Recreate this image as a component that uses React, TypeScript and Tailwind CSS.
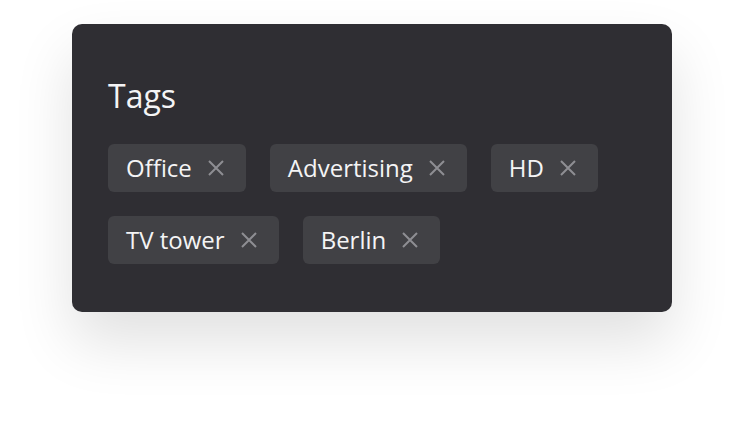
const tags = ["Office", "Advertising", "HD", "TV tower", "Berlin"];

function CloseIcon() {
  return (
    <svg width="24" height="24" viewBox="0 0 24 24" className="shrink-0 text-[#8e8e93]">
      <path d="M5 5L19 19M19 5L5 19" stroke="currentColor" strokeWidth="2" strokeLinecap="butt" />
    </svg>
  );
}

function Tag({ label }: { label: string }) {
  return (
    <div className="flex h-12 items-center gap-3 rounded-md bg-[#414145] pl-[18px] pr-[18px]">
      <span className="text-[24px] leading-none text-[#f4f4f5]">{label}</span>
      <CloseIcon />
    </div>
  );
}

export default function App() {
  return (
    <div className="h-[432px] w-[744px] bg-white pt-6 pl-[72px] font-['Open_Sans',sans-serif]">
      <div className="w-[600px] rounded-[10px] bg-[#2f2e33] px-9 pt-14 pb-12 shadow-[0_30px_60px_rgba(0,0,0,0.12)]">
        <h2 className="text-[32px] leading-8 text-[#f4f4f5]">Tags</h2>
        <div className="mt-8 flex flex-wrap gap-6">
          {tags.map((t) => (
            <Tag key={t} label={t} />
          ))}
        </div>
      </div>
    </div>
  );
}
